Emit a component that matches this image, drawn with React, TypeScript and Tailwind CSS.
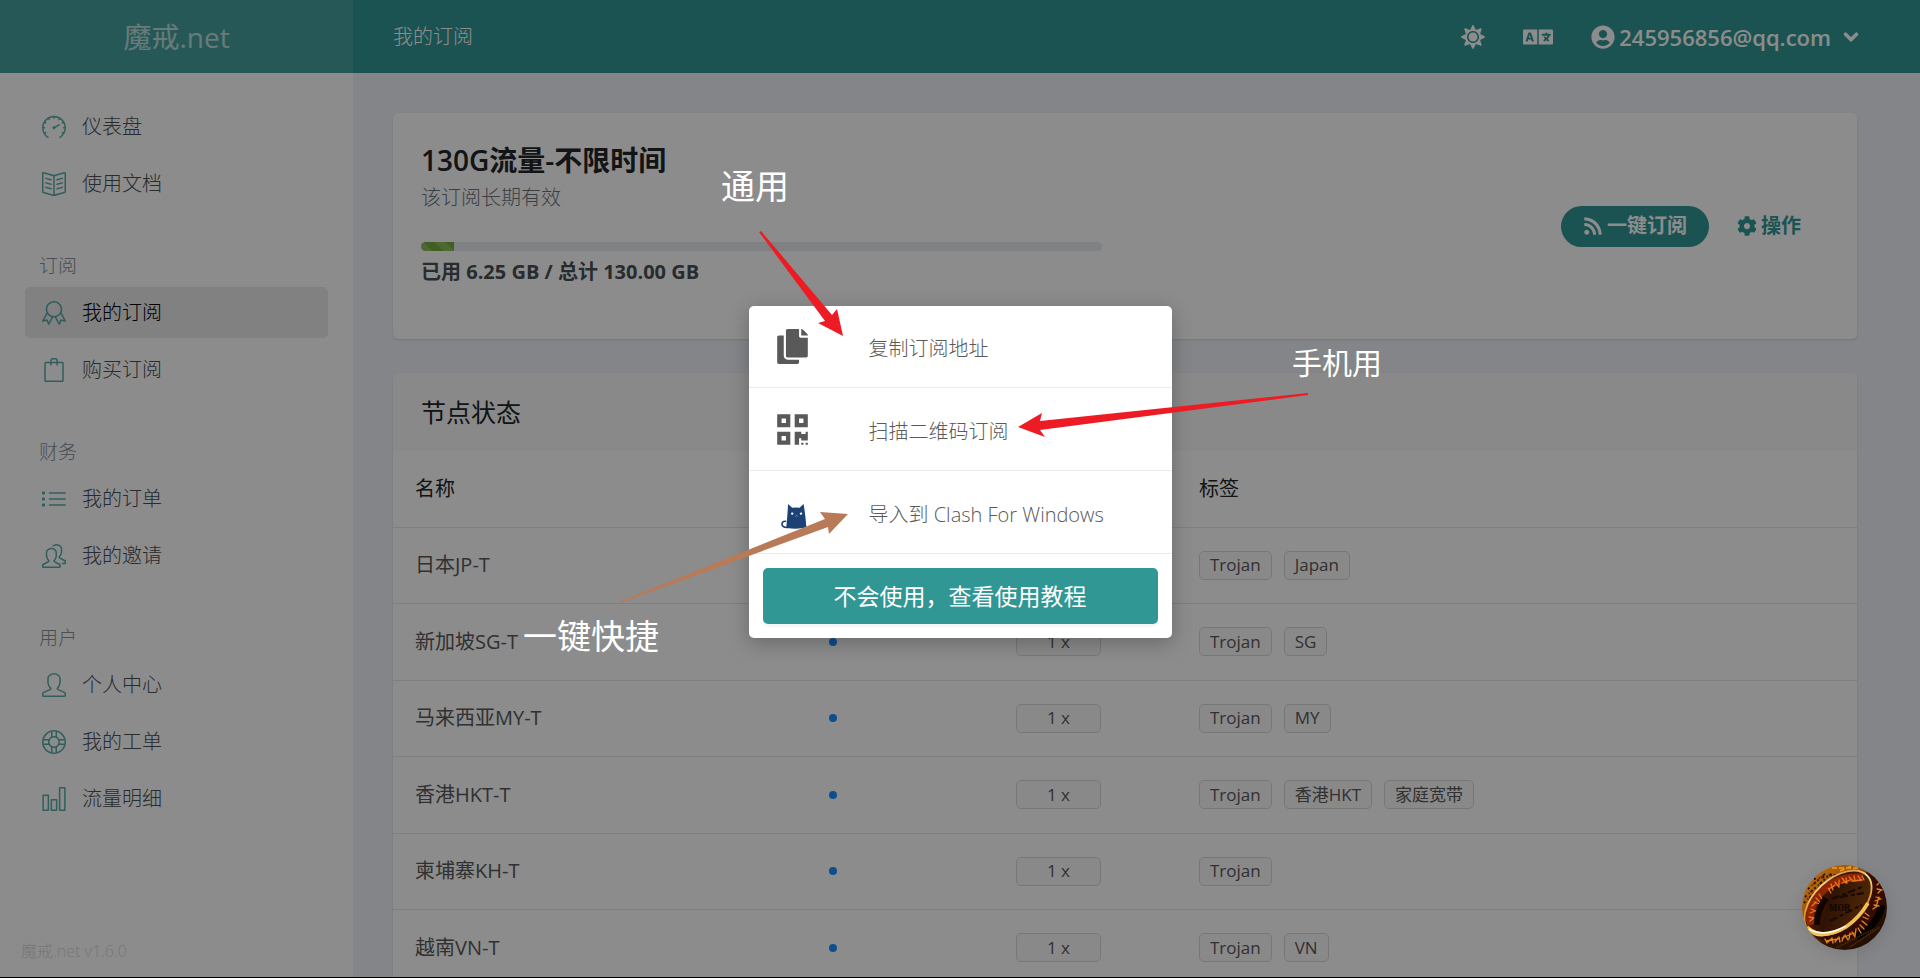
import React from 'react';
import { FaSun, FaLanguage, FaUserCircle, FaChevronDown, FaRss, FaCog, FaCopy, FaQrcode } from 'react-icons/fa';
import {
  SlSpeedometer, SlBookOpen, SlBadge, SlBag, SlList,
  SlPeople, SlUser, SlSupport, SlChart
} from 'react-icons/sl';
import type { IconType } from 'react-icons';

interface NavItem {
  label: string;
  icon: IconType;
  active?: boolean;
}

interface NavGroup {
  title?: string;
  items: NavItem[];
}

const navGroups: NavGroup[] = [
  {
    items: [
      { label: '仪表盘', icon: SlSpeedometer },
      { label: '使用文档', icon: SlBookOpen }
    ]
  },
  {
    title: '订阅',
    items: [
      { label: '我的订阅', icon: SlBadge, active: true },
      { label: '购买订阅', icon: SlBag }
    ]
  },
  {
    title: '财务',
    items: [
      { label: '我的订单', icon: SlList },
      { label: '我的邀请', icon: SlPeople }
    ]
  },
  {
    title: '用户',
    items: [
      { label: '个人中心', icon: SlUser },
      { label: '我的工单', icon: SlSupport },
      { label: '流量明细', icon: SlChart }
    ]
  }
];

const nodes = [
  { name: '日本JP-T', rate: '1 x', tags: ['Trojan', 'Japan'] },
  { name: '新加坡SG-T', rate: '1 x', tags: ['Trojan', 'SG'] },
  { name: '马来西亚MY-T', rate: '1 x', tags: ['Trojan', 'MY'] },
  { name: '香港HKT-T', rate: '1 x', tags: ['Trojan', '香港HKT', '家庭宽带'] },
  { name: '柬埔寨KH-T', rate: '1 x', tags: ['Trojan'] },
  { name: '越南VN-T', rate: '1 x', tags: ['Trojan', 'VN'] }
];

function Sidebar() {
  return (
    <aside className="flex w-[353px] shrink-0 flex-col bg-white">
      <div className="flex h-[73px] shrink-0 items-center justify-center bg-[#46a19f] pt-px text-[28px] font-normal text-white/65">
        魔戒.net
      </div>
      <nav className="flex-1 px-[25px] pt-7">
        {navGroups.map((group, i) => (
          <div key={i}>
            {group.title && (
              <h3 className="px-[14px] pt-[42px] pb-[6px] text-[19px] leading-[30px] text-[#869099]">{group.title}</h3>
            )}
            <ul className="flex flex-col gap-[6px]">
              {group.items.map(({ label, icon: Icon, active }) => (
                <li key={label}>
                  <a
                    href="#"
                    className={`flex h-[51px] items-center gap-4 rounded-[5px] px-[17px] pt-px text-xl ${active ? 'bg-[#ebebeb] text-black' : 'text-[#495057]'}`}
                  >
                    <Icon className="size-6 text-[#319795]/80" />
                    {label}
                  </a>
                </li>
              ))}
            </ul>
          </div>
        ))}
      </nav>
      <p className="px-[21px] pb-[13px] text-base leading-[26px] text-[#d5d9dc]">魔戒.net v1.6.0</p>
    </aside>
  );
}

function Topbar() {
  return (
    <header className="flex h-[73px] shrink-0 items-center bg-[#319795] pt-px pr-[61px] pl-10 text-white">
      <h1 className="flex-1 text-xl">我的订阅</h1>
      <button type="button" aria-label="主题" className="mr-[38px]">
        <FaSun className="size-6" />
      </button>
      <button type="button" aria-label="语言" className="mr-[38px]">
        <FaLanguage className="h-6 w-[30px]" />
      </button>
      <button type="button" className="flex items-center gap-1 text-[22px] font-semibold">
        <FaUserCircle className="size-6" />
        245956856@qq.com
        <FaChevronDown className="ml-2 size-4 stroke-current stroke-[36px]" />
      </button>
    </header>
  );
}

function PlanCard() {
  return (
    <section className="grid grid-cols-2 gap-[46px] rounded-[5px] bg-white px-7 shadow-sm">
      <div className="pt-[27px] pb-[51px]">
        <h2 className="text-[28px] leading-10 font-semibold text-[#212529]">130G流量-不限时间</h2>
        <p className="text-xl leading-9 text-[#6c757d]">该订阅长期有效</p>
        <div className="mt-[26px] h-[9px] overflow-hidden rounded-[5px] bg-[#e9ecef]">
          <div
            className="h-full bg-[repeating-linear-gradient(45deg,#8fbd5e_0_8px,#77ae3c_8px_16px)]"
            style={{ width: `${(6.25 / 130) * 100}%` }}
          />
        </div>
        <p className="mt-[5px] text-xl leading-8 font-bold text-[#495057]">已用 6.25 GB / 总计 130.00 GB</p>
      </div>
      <div className="flex items-center justify-end gap-[6px] pr-[6px]">
        <button type="button" className="flex h-[41px] items-center gap-1 rounded-full bg-[#319795] px-[22px] text-xl font-bold text-white">
          <FaRss className="size-5" />
          一键订阅
        </button>
        <button type="button" className="flex h-[41px] items-center gap-1 px-[22px] text-xl font-bold text-[#319795]">
          <FaCog className="size-5" />
          操作
        </button>
      </div>
    </section>
  );
}

function Tag({ children, wide }: { children: React.ReactNode; wide?: boolean }) {
  return (
    <span
      className={`inline-flex h-[29px] items-center justify-center rounded-[5px] border border-[#d9d9d9] bg-[#fafafa] px-[10px] text-[17px] text-[#595959] ${wide ? 'w-[85px]' : ''}`}
    >
      {children}
    </span>
  );
}

function NodeTable() {
  return (
    <section className="rounded-[5px] bg-white shadow-sm">
      <h2 className="rounded-t-[5px] bg-[#f9f9f9] px-7 py-[19px] text-[25px] leading-10 font-normal text-[#212529]">节点状态</h2>
      <table className="w-full table-fixed text-left text-xl font-normal text-[#595959]">
        <thead>
          <tr className="h-[76px] border-b border-[#e8e8e8] text-[#262626]">
            <th className="w-[414px] px-[22px] font-normal">名称</th>
            <th className="w-[187px] px-[22px] font-normal">状态</th>
            <th className="w-[183px] px-[22px] font-normal">倍率</th>
            <th className="px-[22px] font-normal">标签</th>
          </tr>
        </thead>
        <tbody>
          {nodes.map((node) => (
            <tr key={node.name} className="h-[76px] border-b border-[#e8e8e8] even:h-[77px]">
              <td className="px-[22px]">{node.name}</td>
              <td className="px-[22px]">
                <span className="block size-2 rounded-full bg-[#1890ff]" />
              </td>
              <td className="px-[22px]">
                <div className="flex">
                  <Tag wide>{node.rate}</Tag>
                </div>
              </td>
              <td className="px-[22px]">
                <div className="flex gap-3">
                  {node.tags.map((tag) => (
                    <Tag key={tag}>{tag}</Tag>
                  ))}
                </div>
              </td>
            </tr>
          ))}
        </tbody>
      </table>
    </section>
  );
}

function ClashIcon() {
  return (
    <svg viewBox="0 0 26 26" className="size-[26px]">
      <path d="M7 1 L11.2 4.8 Q15 4 18.6 4.8 L22.6 1 Q24.6 13 25.4 24.6 Q16 26.6 6 25 Q5 24.8 5.4 23 Q6.6 12 7 1Z" fill="#1c4175" />
      <path d="M4.6 18.2 Q1 18 1 21.4 Q1.4 24.8 7 24.4" fill="none" stroke="#1c4175" strokeWidth="1.6" strokeLinecap="round" />
      <circle cx="11.2" cy="10.6" r="1.2" fill="#fff" />
      <circle cx="20" cy="10.6" r="1.2" fill="#fff" />
      <path d="M14.2 13.4 L15.6 12.6 L17 13.4" fill="none" stroke="#8fa3bf" strokeWidth="0.7" />
    </svg>
  );
}

function SubscribeModal() {
  const row = 'flex h-[83px] w-full items-center border-b border-[#ebebeb] pt-[5px] text-left text-xl text-[#595959] first:h-[82px]';

  return (
    <div className="absolute inset-0 flex items-start justify-center bg-black/45 pt-[306px]">
      <div role="dialog" aria-label="一键订阅" className="w-[423px] overflow-hidden rounded-[5px] bg-white shadow-[0_5px_20px_rgba(0,0,0,0.25)]">
        <button type="button" className={row}>
          <span className="flex w-[120px] pb-[5px] pl-7"><FaCopy className="h-[35px] w-[31px]" /></span>
          复制订阅地址
        </button>
        <button type="button" className={row}>
          <span className="flex w-[120px] pb-[5px] pl-7"><FaQrcode className="h-[35px] w-[31px]" /></span>
          扫描二维码订阅
        </button>
        <button type="button" className={row}>
          <span className="flex w-[120px] pt-[3px] pl-8"><ClashIcon /></span>
          导入到 Clash For Windows
        </button>
        <div className="p-[14px]">
          <button type="button" className="h-14 w-full rounded-[5px] bg-[#319795] text-[23px] font-normal text-white shadow-[0_3px_0_rgba(0,0,0,0.04)]">
            不会使用，查看使用教程
          </button>
        </div>
      </div>
    </div>
  );
}

function Annotations() {
  return (
    <div className="pointer-events-none absolute inset-0 font-normal text-white">
      <svg width="1920" height="978" viewBox="0 0 1920 978" className="absolute top-0 left-0 max-w-none">
        <polygon points="759,232 761,231 832,315 837,309 843,336 818,323 825,321" fill="#ed1c24" />
        <polygon points="1308,393 1308,395 1040,430 1045,437 1018,427 1042,413 1040,421" fill="#ed1c24" />
        <polygon points="620,603 621,601 825,519 820,512 848,514 829,534 828,527" fill="#b97a57" />
      </svg>
      <span className="absolute top-[161px] left-[721px] text-[34px] leading-[50px]">通用</span>
      <span className="absolute top-[338px] left-[1292px] text-3xl leading-[50px]">手机用</span>
      <span className="absolute top-[611px] left-[523px] text-[34px] leading-[50px]">一键快捷</span>
    </div>
  );
}

function RingButton() {
  return (
    <button type="button" aria-label="客服" className="absolute right-[33px] bottom-[27px] size-[85px] rounded-full shadow-[0_4px_16px_rgba(0,0,0,0.12)]">
      <svg viewBox="0 0 85 85" className="size-full">
        <defs>
          <clipPath id="disc"><circle cx="42.5" cy="42.5" r="42.5" /></clipPath>
          <linearGradient id="back" x1="0" y1="0" x2="1" y2="1">
            <stop offset="0" stopColor="#c8760e" />
            <stop offset="0.35" stopColor="#9a5008" />
            <stop offset="0.6" stopColor="#2c1204" />
            <stop offset="1" stopColor="#1c0e03" />
          </linearGradient>
          <linearGradient id="inside" x1="0" y1="0" x2="1" y2="1">
            <stop offset="0" stopColor="#7a2206" />
            <stop offset="0.4" stopColor="#2e1204" />
            <stop offset="1" stopColor="#5a2e08" />
          </linearGradient>
          <linearGradient id="rim" x1="0" y1="1" x2="1" y2="0">
            <stop offset="0" stopColor="#fff0b0" />
            <stop offset="0.45" stopColor="#d9962c" />
            <stop offset="0.75" stopColor="#f6dc90" />
            <stop offset="1" stopColor="#a5441a" />
          </linearGradient>
        </defs>
        <g clipPath="url(#disc)">
          <rect width="85" height="85" fill="url(#back)" />
          <path d="M6 24 L24 8 M3 32 L30 8 M2 38 L20 20 M12 14 L34 10" stroke="#2a1203" strokeWidth="1.8" strokeDasharray="2 3 1 1.4 3 2" />
          <path d="M30 3 L58 3 M38 6 L50 1" stroke="#f09a18" strokeWidth="1.6" strokeDasharray="5 2" />
          {/* outer band */}
          <path d="M64 7 Q88 14 82 36 Q76 62 48 74 Q26 82 10 69 Q44 70 66 40Z" fill="#350c04" />
          <path d="M80 40 Q76 60 54 72" fill="none" stroke="#050200" strokeWidth="7" />
          <ellipse cx="36" cy="38" rx="40" ry="24" transform="rotate(-43 36 38)" fill="url(#inside)" />
          <path d="M9 60 Q5 42 18 28 Q36 10 61 13" fill="none" stroke="#8e2606" strokeWidth="8" />
          {/* inner engraving */}
          <path
            d="M8 56l4-3M7 52l5 1M8 48l5-2M9 44l5 2M10 41l4-4M12 37l6 2M14 33l4 4M17 29l3 5M26 23l3 5M29 19l2 6M33 17l4 5M37 15l0 6M40 13l4 5M44 13l1 5M47 12l4 4M52 11l1 5M56 11l3 4M60 11l2 4M27 24l6-4M40 18l8-3M50 16l10-1"
            fill="none"
            stroke="#e8761c"
            strokeWidth="1.3"
            strokeLinecap="round"
          />
          <path d="M15 60 Q15 46 24 33" fill="none" stroke="#120500" strokeWidth="6" />
          <path d="M30 34 L60 22 M28 56 L60 40 M38 32 L62 28" stroke="#160a02" strokeWidth="2" strokeDasharray="8 3 4 2" />
          <text x="27" y="46" fontSize="10" fill="#120701" className="font-serif font-bold">MOR</text>
          {/* lit rim */}
          <ellipse cx="36" cy="38" rx="40" ry="24" transform="rotate(-43 36 38)" fill="none" stroke="url(#rim)" strokeWidth="1.8" />
          <path d="M5 62 Q20 76 44 62 Q58 52 66 38" fill="none" stroke="#f0bf4e" strokeWidth="3.6" />
          <path d="M7 64 Q22 73 44 61" fill="none" stroke="#fffbe0" strokeWidth="1.6" />
          {/* outer engraving */}
          <path
            d="M23 74l2 4M26 77l3-3M30 73l1 5M33 77l3-4M37 72l1 5M40 76l2-5M43 70l3 5M47 74l1-6M50 67l3 5M53 71l1-7M56 63l3 5M58 60l4 4M60 56l5 4M61 52l5 2M63 48l4 3M24 76l12-2M40 73l12-5M71 44l4-3M72 40l5 1M73 36l5-2M74 32l5 2M76 28l3-3M75 24l5 1M75 20l3-3M74 42l3-10"
            fill="none"
            stroke="#e08420"
            strokeWidth="1.3"
            strokeLinecap="round"
          />
          <path d="M34 83 L72 64 M48 82 L78 62" stroke="#6a3a0a" strokeWidth="1.2" strokeDasharray="1 1" />
        </g>
      </svg>
    </button>
  );
}

export default function App() {
  return (
    <div className="relative flex h-screen overflow-hidden border-b border-black bg-[#f0f3f8] font-['Open_Sans','Noto_Sans_CJK_SC',sans-serif] font-light">
      <Sidebar />
      <div className="flex min-w-0 flex-1 flex-col">
        <Topbar />
        <main className="flex flex-1 flex-col gap-[34px] overflow-hidden pt-10 pr-[63px] pl-10 *:shrink-0">
          <PlanCard />
          <NodeTable />
        </main>
      </div>
      <SubscribeModal />
      <RingButton />
      <Annotations />
    </div>
  );
}
